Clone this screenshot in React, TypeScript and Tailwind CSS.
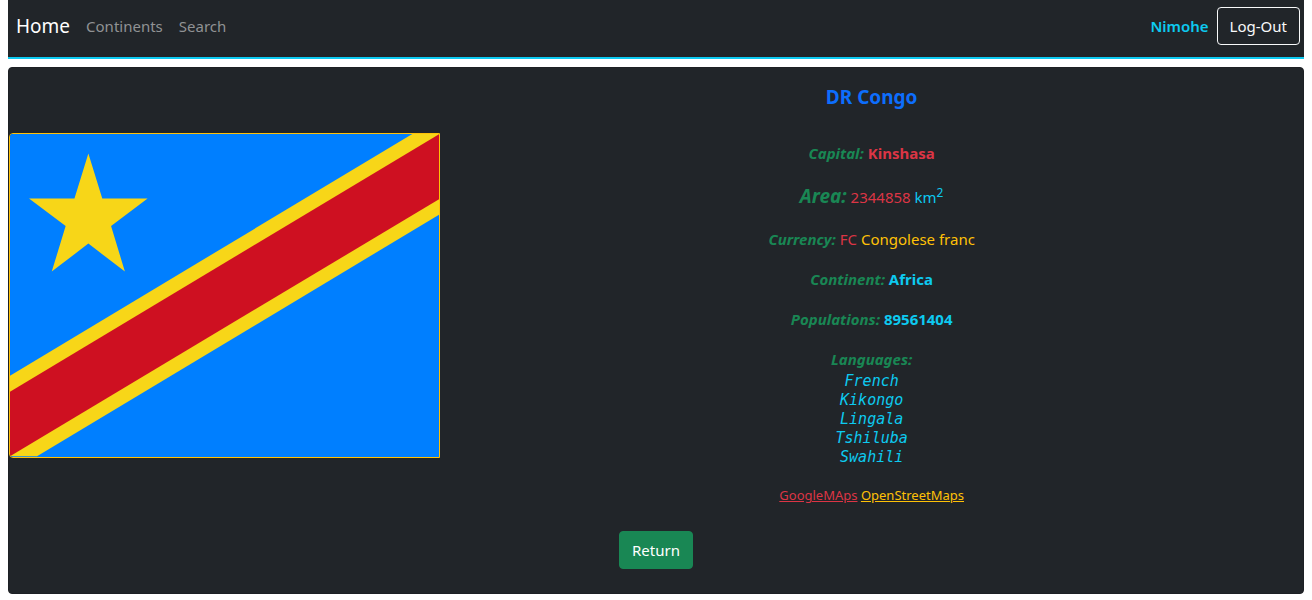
import type { ReactNode } from "react";

const languages = ["French", "Kikongo", "Lingala", "Tshiluba", "Swahili"];

function Flag() {
  return (
    <div className="overflow-hidden rounded-tl-sm rounded-bl-sm border border-[#ffc107]">
      <svg
        viewBox="0 0 429 322"
        role="img"
        aria-label="Flag of DR Congo"
        className="block w-full bg-[#007fff]"
      >
        <rect width="429" height="322" fill="#007fff" />
        <path d="M0 322V241.5L402 0H429V80.5L27 322Z" fill="#f7d618" />
        <path d="M0 322V257.5L429 0V65L0 322Z" fill="#ce1021" />
        <path
          d="M78.3 19.5L92.2 64.5H137.5L101 92L114.8 137.5L78.3 109.5L41.7 137.5L55.6 92L19 64.5H64.4Z"
          fill="#f7d618"
        />
      </svg>
    </div>
  );
}

function Label({ children }: { children: ReactNode }) {
  return <strong className="font-bold italic text-[#198754]">{children}</strong>;
}

export default function App() {
  return (
    <div className="bg-white px-2 pb-2 font-['Noto_Sans','Open_Sans',sans-serif] text-[15px] leading-6">
      <nav className="flex items-center justify-between border-b-2 border-[#0dcaf0] bg-[#212529] pt-[7px] pr-1 pb-3 pl-2">
        <div className="flex items-center gap-4">
          <a href="#home" className="text-[19px] text-white">
            Home
          </a>
          <a href="#continents" className="text-[#909294]">
            Continents
          </a>
          <a href="#search" className="text-[#909294]">
            Search
          </a>
        </div>
        <div className="flex items-center gap-2">
          <span className="font-semibold text-[#0dcaf0]">Nimohe</span>
          <button
            type="button"
            className="rounded border border-[#f8f9fa] px-3 py-1.5 text-[#f8f9fa]"
          >
            Log-Out
          </button>
        </div>
      </nav>

      <main className="mt-2 rounded border border-[#1d2024] bg-[#212529] pb-6 text-center">
        <div className="grid grid-cols-3 items-center">
          <Flag />
          <div className="col-span-2 flex flex-col gap-4 p-4">
            <h1 className="mb-4 pt-px text-[19px] font-bold text-[#0d6efd]">DR Congo</h1>
            <p>
              <Label>Capital:</Label> <b className="text-[#dc3545]">Kinshasa</b>
            </p>
            <p className="pt-0.5 leading-[27px]">
              <span className="text-[19px]">
                <Label>Area:</Label>
              </span>{" "}
              <span className="text-[#dc3545]">2344858</span>{" "}
              <span className="text-[#0dcaf0]">
                km<sup className="text-xs">2</sup>
              </span>
            </p>
            <p>
              <Label>Currency:</Label> <span className="text-[#dc3545]">FC</span>{" "}
              <span className="text-[#ffc107]">Congolese franc</span>
            </p>
            <p>
              <Label>Continent:</Label> <b className="text-[#0dcaf0]">Africa</b>
            </p>
            <p>
              <Label>Populations:</Label> <b className="text-[#0dcaf0]">89561404</b>
            </p>
            <div>
              <Label>Languages:</Label>
              <ul className="mt-px font-['DejaVu_Sans_Mono',monospace] text-[15px] leading-[19px] text-[#0dcaf0] italic">
                {languages.map((language) => (
                  <li key={language}>{language}</li>
                ))}
              </ul>
            </div>
            <p className="text-[13px]">
              <a href="#google-maps" className="text-[#dc3545] underline">
                GoogleMAps
              </a>{" "}
              <a href="#open-street-maps" className="text-[#ffc107] underline">
                OpenStreetMaps
              </a>
            </p>
          </div>
        </div>
        <button
          type="button"
          className="mt-2 rounded border border-[#198754] bg-[#198754] px-3 py-1.5 text-white"
        >
          Return
        </button>
      </main>
    </div>
  );
}
